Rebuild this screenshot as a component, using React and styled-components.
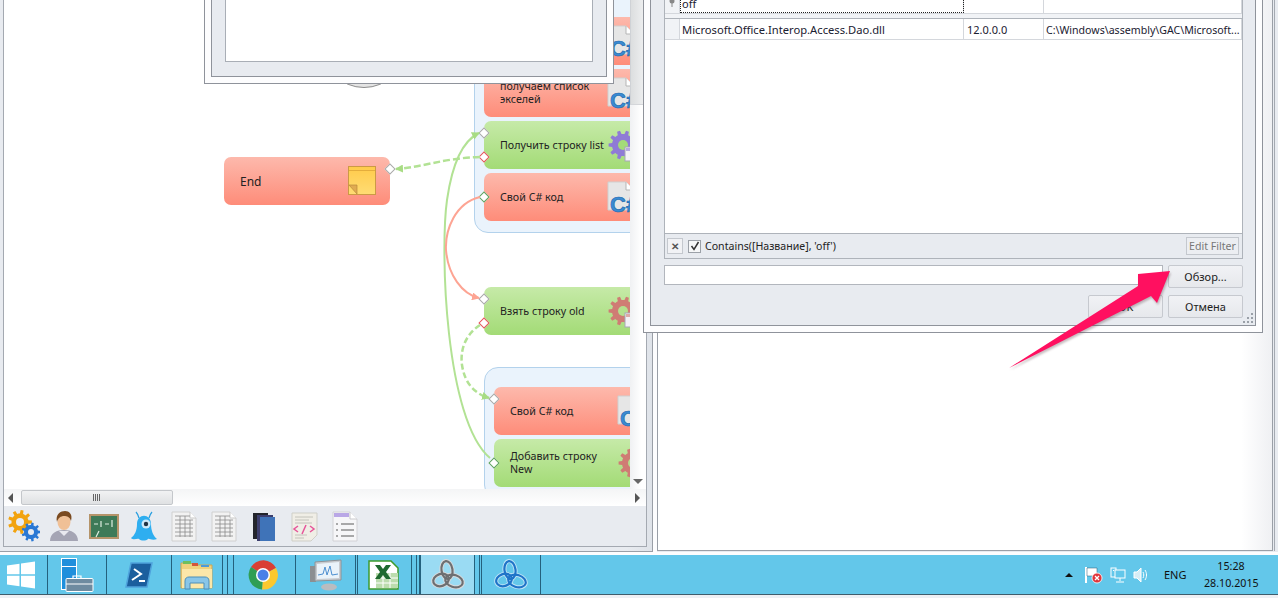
import React from 'react'
import styled, { createGlobalStyle } from 'styled-components'

const GlobalStyle = createGlobalStyle`
    html, body {
        margin: 0;
        padding: 0;
        background: #eef0f4;
    }
    * {
        box-sizing: border-box;
    }
`;

const UI_FONT = `"Noto Sans", "Liberation Sans", sans-serif`;

const Screen = styled.div`
    position: relative;
    width: 1278px;
    height: 598px;
    overflow: hidden;
    display: flex;
    flex-direction: column;
    font-family: ${UI_FONT};
    font-size: 11px;
    color: #222;
    background: #eef0f4;
`;

const Workspace = styled.div`
    display: flex;
    height: 555px;
    padding-bottom: 3px;
    background: #fdfdfe;
`;

const LeftWindow = styled.div`
    width: 653px;
    display: flex;
    padding: 0 5px 4px 3px;
    background: linear-gradient(90deg, #e8ebf0 96%, #dfe3e9);
    border-right: 1px solid #9a9fa7;
    border-bottom: 1px solid #9a9fa7;
`;

const Panel = styled.div`
    flex: 1;
    display: flex;
    flex-direction: column;
    background: #fff;
    border: 1px solid #a4a9b1;
    border-top: 0;
    min-width: 0;
`;

const CanvasRow = styled.div`
    flex: 1;
    display: flex;
    min-height: 0;
`;

const Canvas = styled.div`
    position: relative;
    width: 626px;
    overflow: hidden;
    background: #fff;
`;

const VScroll = styled.div`
    flex: 1;
    display: flex;
    flex-direction: column;
    align-items: center;
    justify-content: flex-end;
    padding-bottom: 5px;
    background: linear-gradient(90deg, #f0f1f3, #fff 70%);
`;

const ScrollThumb = styled.div`
    width: 100%;
    height: 105px;
    margin-bottom: auto;
    background: linear-gradient(90deg, #dcdedf, #f1f2f3);
    border-left: 1px solid #cfd2d6;
    border-bottom: 1px solid #d4d6da;
`;

const ArrowDown = styled.div`
    width: 0;
    height: 0;
    border-left: 5px solid transparent;
    border-right: 5px solid transparent;
    border-top: 5px solid #666;
`;

const HScroll = styled.div`
    height: 17px;
    display: flex;
    align-items: center;
    padding: 0 6px 0 4px;
    background: linear-gradient(180deg, #f4f5f6, #fff);
`;

const ArrowLeft = styled.div`
    width: 0;
    height: 0;
    margin-right: 8px;
    border-top: 5px solid transparent;
    border-bottom: 5px solid transparent;
    border-right: 5px solid #555;
`;

const ArrowRight = styled.div`
    width: 0;
    height: 0;
    margin-left: auto;
    border-top: 5px solid transparent;
    border-bottom: 5px solid transparent;
    border-left: 5px solid #555;
`;

const HThumb = styled.div`
    width: 152px;
    height: 15px;
    display: flex;
    align-items: center;
    justify-content: center;
    background: linear-gradient(180deg, #f1f2f3, #dfe1e3);
    border: 1px solid #c4c7cb;
    border-radius: 2px;
`;

const IconBar = styled.div`
    height: 40px;
    display: flex;
    align-items: center;
    gap: 8px;
    padding-left: 4px;
    background: #e8ebf0;
`;

const RightWindow = styled.div`
    flex: 1;
    margin-left: 4px;
    display: flex;
    background: #e8ebf0;
    border-bottom: 1px solid transparent;
`;

const RightBody = styled.div`
    width: 616px;
    background: linear-gradient(90deg, #fff 95%, #eff0f3);
    border-left: 1px solid #9a9fa7;
    border-right: 1px solid #9a9fa7;
    border-bottom: 1px solid #9a9fa7;
`;

const RightEdge = styled.div`
    flex: 1;
    margin-left: 1px;
    border-left: 1px solid #a4a9b1;
`;

/* diagram */

const Group = styled.div`
    position: absolute;
    left: ${p => p.$x}px;
    top: ${p => p.$y}px;
    width: 190px;
    display: flex;
    flex-direction: column;
    gap: 4px;
    padding: ${p => p.$pad}px 0 11px 9px;
    background: #eaf3fc;
    border: 1px solid #b3d2ec;
    border-radius: 14px;
`;

const Node = styled.div`
    position: ${p => (p.$x !== undefined ? 'absolute' : 'relative')};
    left: ${p => p.$x}px;
    top: ${p => p.$y}px;
    flex: none;
    width: 166px;
    height: 48px;
    display: flex;
    align-items: center;
    padding-left: 16px;
    border-radius: 7px;
    background: ${p => p.$green
        ? 'linear-gradient(180deg, #c6eaa8, #a3db76)'
        : 'linear-gradient(180deg, #fdb9ac, #fe8c79)'};
`;

const NodeLabel = styled.div`
    width: 108px;
    flex: none;
    font-size: ${p => p.$size || 10.7}px;
    line-height: 13px;
    color: #222;
    white-space: pre-line;
`;

const NodeGlyph = styled.div`
    width: 40px;
    height: 40px;
    flex: none;
    margin-top: 8px;
`;

const Port = styled.div`
    position: absolute;
    left: ${p => (p.$right ? 'auto' : '-4px')};
    right: ${p => (p.$right ? '-4px' : 'auto')};
    top: ${p => p.$top - 4}px;
    width: 8px;
    height: 8px;
    background: #fff;
    border: 1px solid ${p => p.$color};
    transform: rotate(45deg);
`;

const StartCircle = styled.div`
    position: absolute;
    left: 318px;
    top: 4px;
    width: 84px;
    height: 84px;
    border-radius: 50%;
    background: #e4e4e4;
    border: 1px solid #8c8c8c;
`;

const Wires = styled.svg`
    position: absolute;
    left: 0;
    top: 0;
    pointer-events: none;
`;

/* dialogs */

const SmallDialog = styled.div`
    position: absolute;
    left: 204px;
    top: 0;
    width: 410px;
    height: 84px;
    padding: 0 6px 6px;
    background: #fdfdfe;
    border: 1px solid #8f939b;
    border-top: 0;
`;

const SmallFrame = styled.div`
    height: 100%;
    padding: 0 13px 14px;
    background: #e8ebf0;
    border: 1px solid #8f939b;
    border-top: 0;
`;

const SmallContent = styled.div`
    height: 100%;
    background: #fff;
    border: 1px solid #a9aeb6;
    border-top: 0;
`;

const FilterDialog = styled.div`
    position: absolute;
    left: 643px;
    top: 0;
    width: 620px;
    height: 333px;
    padding: 0 6px 6px;
    background: #fdfdfe;
    border: 1px solid #8f939b;
    border-top: 0;
`;

const DialogFrame = styled.div`
    position: relative;
    height: 100%;
    display: flex;
    flex-direction: column;
    padding: 0 12px 7px 13px;
    background: #e8ebf0;
    border: 1px solid #8f939b;
    border-top: 0;
`;

const TableBox = styled.div`
    height: 259px;
    display: flex;
    flex-direction: column;
    overflow: hidden;
    background: #fff;
    border: 1px solid #aeb3ba;
    border-top: 0;
`;

const Rows = styled.div`
    flex: 1;
    overflow: hidden;
`;

const GridRow = styled.div`
    display: grid;
    grid-template-columns: 15px 284px 80px 1fr;
    height: ${p => p.$h}px;
    margin-top: ${p => p.$offset || 0}px;
    border-bottom: 1px solid #d4d7dc;
    color: #1a2030;
    line-height: ${p => p.$line}px;
`;

const Cell = styled.div`
    padding-left: ${p => p.$pad || 2}px;
    border-right: 1px solid #d4d7dc;
    font-size: ${p => p.$size || 11}px;
    white-space: nowrap;
    overflow: hidden;
    background: ${p => (p.$head ? '#f1f3f6' : 'transparent')};
    outline: ${p => (p.$focus ? '1px dotted #222' : 'none')};
    outline-offset: -1px;
`;

const RowGap = styled.div`
    height: 5px;
    background: #f1f3f6;
    border-bottom: 1px solid #aeb3ba;
`;

const FilterBar = styled.div`
    height: 25px;
    flex: none;
    display: flex;
    align-items: center;
    padding: 0 3px 0 2px;
    background: #e8ebf0;
    border-top: 1px solid #aeb3ba;
`;

const FilterClose = styled.div`
    width: 16px;
    height: 16px;
    display: flex;
    align-items: center;
    justify-content: center;
    background: #f1f2f5;
    border: 1px solid #c4c8ce;
    color: #555;
    font-size: 10px;
    font-weight: 700;
    line-height: 1;
`;

const FilterCheck = styled.div`
    width: 13px;
    height: 13px;
    margin: 0 4px 0 5px;
    display: flex;
    align-items: center;
    justify-content: center;
    background: #f6f7f8;
    border: 1px solid #9ca1a8;
`;

const FilterText = styled.div`
    flex: 1;
    font-size: 10.6px;
    color: #222;
`;

const EditFilter = styled.div`
    width: 53px;
    height: 18px;
    text-align: center;
    font-size: 10.6px;
    line-height: 16px;
    color: #777;
    background: #eceef2;
    border: 1px solid #c4c8ce;
`;

const PathRow = styled.div`
    display: flex;
    justify-content: space-between;
    margin-top: 6px;
`;

const ButtonRow = styled.div`
    display: flex;
    justify-content: flex-end;
    gap: 5px;
    margin-top: 7px;
`;

const PathInput = styled.div`
    width: 499px;
    height: 20px;
    background: #fff;
    border: 1px solid #b2b6bd;
`;

const DialogButton = styled.div`
    width: 75px;
    height: 23px;
    text-align: center;
    line-height: 21px;
    color: #222;
    background: linear-gradient(180deg, #f1f2f5, #e6e8ec);
    border: 1px solid #c6c9cf;
    border-radius: 2px;
`;

const Grip = styled.svg`
    position: absolute;
    right: 1px;
    bottom: 1px;
`;

const Pointer = styled.svg`
    position: absolute;
    left: 1000px;
    top: 260px;
    pointer-events: none;
    filter: drop-shadow(1px 2px 1px rgba(90, 60, 70, 0.35));
`;

/* taskbar */

const Taskbar = styled.div`
    height: 40px;
    display: flex;
    align-items: stretch;
    background: #63c7ea;
    border-bottom: 1px solid #3f5d6c;
`;

const TaskButton = styled.div`
    width: ${p => p.$w}px;
    flex: none;
    display: flex;
    align-items: center;
    justify-content: center;
    padding-right: ${p => p.$nudge || 0}px;
    border-right: 1px solid #24617d;
    border-left: ${p => (p.$active ? '1px solid #24617d' : '0')};
    background: ${p => (p.$active ? '#9adbf3' : 'transparent')};
`;

const Tray = styled.div`
    margin-left: auto;
    display: flex;
    align-items: center;
    padding-right: 20px;
    color: #111;
    font-size: 11px;
`;

const TrayCaret = styled.div`
    width: 0;
    height: 0;
    margin-right: 11px;
    border-left: 4px solid transparent;
    border-right: 4px solid transparent;
    border-bottom: 4px solid #111;
`;

const TrayLang = styled.div`
    width: 23px;
    margin: 0 17px 0 15px;
    white-space: nowrap;
`;

const Clock = styled.div`
    width: 54px;
    text-align: center;
    font-size: 10.7px;
    line-height: 17px;
    white-space: nowrap;
`;

/* drawings */

const gearPath = (cx, cy, outer, inner, teeth) => {
    const step = (Math.PI * 2) / teeth
    let d = ''
    for (let i = 0; i < teeth; i++) {
        const a = i * step
        const pts = [
            [inner, a - step * 0.5],
            [inner, a - step * 0.28],
            [outer, a - step * 0.17],
            [outer, a + step * 0.17],
            [inner, a + step * 0.28],
        ]
        pts.forEach(([r, t], j) => {
            const x = (cx + r * Math.cos(t)).toFixed(1)
            const y = (cy + r * Math.sin(t)).toFixed(1)
            d += `${i === 0 && j === 0 ? 'M' : 'L'}${x} ${y} `
        })
    }
    return d + 'Z'
}

const SharpIcon = () => (
    <svg width="40" height="40" viewBox="0 0 40 40" overflow="visible">
        <path d="M0 1h18l8 8v20H0z" fill="#e6e6e6" stroke="#cfcfcf" />
        <path d="M18 1v8h8" fill="#fff" stroke="#b5b5b5" />
        <text x="2" y="31" fontFamily="Liberation Sans" fontWeight="700" fontSize="22" fill="#3a8bd2" stroke="#1d68ad" strokeWidth="0.6">C#</text>
    </svg>
)

const GearIcon = ({ color, sheet }) => (
    <svg width="40" height="40" viewBox="0 0 40 40">
        <path d={gearPath(15, 16, 14.5, 11, 10)} fill={color} />
        <circle cx="15" cy="16" r="5" fill={sheet} />
        <rect x="17" y="18" width="15" height="14" fill="#f3f1f6" stroke="#a7a7b5" />
        <rect x="18" y="19" width="13" height="3" fill={color} opacity="0.6" />
    </svg>
)

const StickyIcon = () => (
    <svg width="40" height="40" viewBox="0 0 40 40">
        <defs>
            <linearGradient id="stickyFill" x1="0" y1="0" x2="0" y2="1">
                <stop offset="0" stopColor="#ffcb4a" />
                <stop offset="1" stopColor="#ffdc74" />
            </linearGradient>
        </defs>
        <rect x="0.5" y="1.5" width="27" height="28" fill="url(#stickyFill)" stroke="#cc9a45" />
        <path d="M1 5.500h26" stroke="#e4ad3c" />
        <path d="M1 20h8v9z" fill="#e0ab52" stroke="#b98a3a" strokeWidth="0.7" />
    </svg>
)

const GearsTool = () => (
    <svg width="32" height="32" viewBox="0 0 32 32">
        <path d={gearPath(12, 12, 12, 8.5, 9)} fill="#f2a30f" />
        <circle cx="12" cy="12" r="4" fill="#e8ebf0" />
        <path d={gearPath(23, 22, 9.5, 7, 9)} fill="#2a78d4" />
        <circle cx="23" cy="22" r="3" fill="#e8ebf0" />
    </svg>
)

const PersonTool = () => (
    <svg width="32" height="32" viewBox="0 0 32 32">
        <path d="M2 31c0-8 7-11 14-11s14 3 14 11z" fill="#a5a5b4" />
        <path d="M11 21l5 5 5-5z" fill="#e9e9ef" />
        <ellipse cx="16" cy="12" rx="6.500" ry="8" fill="#f0c096" />
        <path d="M9 12c-2-8 4-11 8-11s8 3 6 10c-1-4-4-5-7-5s-6 2-7 6z" fill="#7a4a20" />
    </svg>
)

const BoardTool = () => (
    <svg width="32" height="32" viewBox="0 0 32 32">
        <rect x="1" y="4" width="30" height="25" fill="#b5946a" />
        <rect x="3" y="6" width="26" height="21" fill="#3e7a58" />
        <path d="M6 14h4M13 11v6M17 14h4M24 10v7M8 27l3-6" stroke="#dfeee2" strokeWidth="1.200" />
    </svg>
)

const MonsterTool = () => (
    <svg width="32" height="32" viewBox="0 0 32 32">
        <path d="M11 8c-1-3-2-5-3-6M21 8c1-3 2-5 3-6" stroke="#2a9fe0" strokeWidth="1.300" fill="none" />
        <path d="M9 14c0-11 14-11 14 0 0 6 2 12 6 15-5 2-8-1-9 0-2 2-7 2-9 0-2-1-5 2-8-1 4-3 6-8 6-14z" fill="#2eaef0" />
        <circle cx="18" cy="14" r="4.500" fill="#cfeafa" />
        <circle cx="18" cy="14" r="2.200" fill="#234" />
    </svg>
)

const SheetTool = () => (
    <svg width="32" height="32" viewBox="0 0 32 32">
        <path d="M4 2h18l6 6v23H4z" fill="#f2f2f2" stroke="#d0d0d0" />
        <path d="M22 2v6h6" fill="#fff" stroke="#c9c9c9" />
        <path d="M7 6h15M7 10h18M7 14h18M7 18h18M7 22h18M7 26h18M12 6v21M17 6v21M22 10v17" stroke="#8b8b8b" strokeWidth="0.800" />
    </svg>
)

const BooksTool = () => (
    <svg width="32" height="32" viewBox="0 0 32 32">
        <rect x="5" y="3" width="15" height="26" fill="#23252c" />
        <rect x="9" y="5" width="16" height="26" fill="#3c3f6e" />
        <rect x="12" y="7" width="15" height="24" fill="#3f73b8" />
    </svg>
)

const XmlTool = () => (
    <svg width="32" height="32" viewBox="0 0 32 32">
        <path d="M4 3h25v22l-6 6H4z" fill="#f0eee6" stroke="#cfcfc8" />
        <path d="M7 7h18M7 10h14M7 13h17M7 25h12M7 28h9" stroke="#b8b8b0" strokeWidth="0.800" />
        <path d="M10 16l-4 3 4 3M22 16l4 3-4 3M18 15l-4 9" stroke="#e6559a" strokeWidth="1.500" fill="none" />
    </svg>
)

const ListTool = () => (
    <svg width="32" height="32" viewBox="0 0 32 32">
        <path d="M5 2h17l7 7v22H5z" fill="#f6f6f8" stroke="#d2d2d6" />
        <path d="M6 3h15v4H6z" fill="#b9a7e6" />
        <path d="M22 2v7h7" fill="#fff" stroke="#c9c9cc" />
        <path d="M8 14h2M13 14h13M8 20h2M13 20h13M8 26h2M13 26h13" stroke="#8f8f8f" strokeWidth="1.500" />
    </svg>
)

const WindowsLogo = () => (
    <svg width="28" height="28" viewBox="0 0 28 28">
        <path d="M0 4.500l12.500-1.800v10.600H0zM14 2.500L28 .5v12.800H14zM0 14.800h12.500v10.500L0 23.500zM14 14.800h14v12.700l-14-2z" fill="#fff" />
    </svg>
)

const ServerIcon = () => (
    <svg width="34" height="34" viewBox="0 0 34 34">
        <rect x="1.500" y=".5" width="15" height="8" fill="#1f8fdc" stroke="#fff" />
        <rect x="1.500" y="8.500" width="15" height="23" fill="#1f8fdc" stroke="#fff" />
        <path d="M13 21v-3h8v3" fill="none" stroke="#fff" strokeWidth="1.200" />
        <rect x="6" y="20.500" width="27" height="13" rx="1" fill="#6e8ba0" stroke="#fff" />
        <path d="M6 26h27" stroke="#fff" />
    </svg>
)

const ShellIcon = () => (
    <svg width="30" height="30" viewBox="0 0 30 30">
        <path d="M7 3h21l-5 24H2z" fill="#1b5f9e" stroke="#4fa3dc" strokeWidth="1.500" />
        <path d="M10 9l7 5-9 6M15 21h6" stroke="#fff" strokeWidth="2" fill="none" />
    </svg>
)

const FolderIcon = () => (
    <svg width="34" height="34" viewBox="0 0 34 34">
        <path d="M1 5h10l2 2h19v23H1z" fill="#f0d27e" stroke="#c9a656" />
        <rect x="3" y="3" width="8" height="3" fill="#6fbf5e" />
        <rect x="12" y="5" width="6" height="3" fill="#d4553a" />
        <rect x="21" y="7" width="8" height="2" fill="#4e9ad8" />
        <path d="M2 11h30v19H2z" fill="#fbe7a9" />
        <path d="M5 31v-8c0-3 2-4 4-4h16c2 0 4 1 4 4v8h-5v-6H10v6z" fill="#89c6e8" stroke="#4d8fb8" />
    </svg>
)

const ChromeIcon = () => (
    <svg width="30" height="30" viewBox="0 0 30 30">
        <path d="M15 15L3 7a14.500 14.500 0 0 1 25 1z" fill="#d93f34" />
        <path d="M15 15l13-7a14.500 14.500 0 0 1-14 21.500z" fill="#fbc82f" />
        <path d="M15 15l-1 14.500A14.500 14.500 0 0 1 3 7z" fill="#2f9e54" />
        <circle cx="15" cy="15" r="7" fill="#fff" />
        <circle cx="15" cy="15" r="5.500" fill="#4a80e8" />
    </svg>
)

const MonitorIcon = () => (
    <svg width="34" height="34" viewBox="0 0 34 34">
        <rect x="1" y="8" width="6" height="16" fill="#8c8f92" />
        <path d="M6 4l26-2v20L6 23z" fill="#c9ccd0" stroke="#8e9296" />
        <path d="M8 6l22-2v16L8 21z" fill="#eaf3fa" />
        <path d="M9 17l5-1 2-7 2 8 3-9 2 9 6-1" fill="none" stroke="#4d8fd0" />
        <ellipse cx="20" cy="29" rx="8" ry="3.500" fill="#b9bcc0" />
    </svg>
)

const ExcelIcon = () => (
    <svg width="34" height="34" viewBox="0 0 34 34">
        <path d="M3 3h22l7 7v21H3z" fill="#fff" stroke="#3f9a2c" strokeWidth="1.500" />
        <path d="M10 15h22v15H10z" fill="#bcdcae" />
        <path d="M10 20h22M10 25h22M17 15v15M24 15v15" stroke="#fff" />
        <path d="M9 7h5l3 4 3-4h5l-5 7 5 7h-5l-3-4-3 4H9l5-7z" fill="#1f6a2f" />
    </svg>
)

const KnotIcon = ({ color, edge }) => (
    <svg width="34" height="32" viewBox="0 0 34 32" fill="none">
        <g stroke={edge} strokeWidth="4">
            <ellipse cx="16" cy="11" rx="5.500" ry="9" transform="rotate(-8 16 11)" />
            <ellipse cx="10" cy="21" rx="8" ry="6" transform="rotate(-20 10 21)" />
            <ellipse cx="23" cy="22" rx="9" ry="6" transform="rotate(18 23 22)" />
        </g>
        <g stroke={color} strokeWidth="2.200">
            <ellipse cx="16" cy="11" rx="5.500" ry="9" transform="rotate(-8 16 11)" />
            <ellipse cx="10" cy="21" rx="8" ry="6" transform="rotate(-20 10 21)" />
            <ellipse cx="23" cy="22" rx="9" ry="6" transform="rotate(18 23 22)" />
        </g>
    </svg>
)

const FlagIcon = () => (
    <svg width="19" height="18" viewBox="0 0 19 18" style={{ marginRight: 7 }}>
        <path d="M2 1v16" stroke="#fff" strokeWidth="2" />
        <path d="M3 2h10v8H3z" fill="#fff" stroke="#2a5570" strokeWidth="0.500" />
        <circle cx="13" cy="12" r="5" fill="#e0353b" stroke="#fff" strokeWidth="0.800" />
        <path d="M11 10l4 4M15 10l-4 4" stroke="#fff" strokeWidth="1.300" />
    </svg>
)

const NetworkIcon = () => (
    <svg width="16" height="18" viewBox="0 0 16 18" fill="none" style={{ marginRight: 7 }}>
        <rect x="1" y="2" width="5" height="9" stroke="#fff" />
        <rect x="5" y="4" width="10" height="8" fill="#63c7ea" stroke="#fff" />
        <path d="M10 12v3M6 16h8M3 4.500h1" stroke="#fff" />
    </svg>
)

const SpeakerIcon = () => (
    <svg width="16" height="18" viewBox="0 0 16 18" fill="none">
        <path d="M1 6h3l4-4v14l-4-4H1z" fill="#d7edf5" stroke="#fff" />
        <path d="M10 6c1 2 1 4 0 6M12 4c2 3 2 7 0 10" stroke="#fff" />
    </svg>
)

const GripLines = () => (
    <svg width="8" height="7" viewBox="0 0 8 7">
        <path d="M.5 0v7M2.500 0v7M4.500 0v7M6.500 0v7" stroke="#666" />
    </svg>
)

const Wiring = () => (
    <Wires width="626" height="489" viewBox="0 0 626 489" fill="none">
        <defs>
            <marker id="greenHead" markerWidth="9" markerHeight="8" refX="7" refY="4" orient="auto" markerUnits="userSpaceOnUse">
                <path d="M0 0l8 4-8 4z" fill="#a8dc84" />
            </marker>
            <marker id="salmonHead" markerWidth="9" markerHeight="8" refX="7" refY="4" orient="auto" markerUnits="userSpaceOnUse">
                <path d="M0 0l8 4-8 4z" fill="#fda493" />
            </marker>
        </defs>
        <path d="M486 458C441 420 436 250 443 200C448 165 458 141 475 133" stroke="#b2e294" strokeWidth="2" markerEnd="url(#greenHead)" />
        <path d="M476 157C440 158 420 167 392 169" stroke="#b2e294" strokeWidth="2.500" strokeDasharray="7 3" markerEnd="url(#greenHead)" />
        <path d="M476 197C451 203 441 230 442 250C444 275 458 294 475 298" stroke="#fda493" strokeWidth="2" markerEnd="url(#salmonHead)" />
        <path d="M476 325C461 335 456 350 458 365C461 385 472 394 485 398" stroke="#b2e294" strokeWidth="2.500" strokeDasharray="6 3" markerEnd="url(#greenHead)" />
    </Wires>
)

const PORT_GREY = '#a9a9a9'
const PORT_RED = '#e5565a'
const PORT_GREEN = '#5ea35e'

const toolIcons = [GearsTool, PersonTool, BoardTool, MonsterTool, SheetTool, SheetTool, BooksTool, XmlTool, ListTool]

const App = () => {
    return (
        <Screen>
            <GlobalStyle />
            <Workspace>
                <LeftWindow>
                    <Panel>
                        <CanvasRow>
                            <Canvas>
                                <StartCircle />
                                <Group $x={470} $y={-20} $pad={36}>
                                    <Node><NodeLabel /><NodeGlyph><SharpIcon /></NodeGlyph></Node>
                                    <Node>
                                        <NodeLabel>{'получаем список\nэкселей'}</NodeLabel>
                                        <NodeGlyph><SharpIcon /></NodeGlyph>
                                    </Node>
                                    <Node $green>
                                        <NodeLabel>Получить строку list</NodeLabel>
                                        <NodeGlyph><GearIcon color="#8f7bd6" sheet="#a4dc78" /></NodeGlyph>
                                        <Port $top={12} $color={PORT_GREY} />
                                        <Port $top={36} $color={PORT_RED} />
                                    </Node>
                                    <Node>
                                        <NodeLabel>Свой C# код</NodeLabel>
                                        <NodeGlyph><SharpIcon /></NodeGlyph>
                                        <Port $top={24} $color={PORT_GREEN} />
                                    </Node>
                                </Group>
                                <Node $x={220} $y={157}>
                                    <NodeLabel $size={12}>End</NodeLabel>
                                    <NodeGlyph><StickyIcon /></NodeGlyph>
                                    <Port $right $top={12} $color={PORT_GREY} />
                                </Node>
                                <Node $x={480} $y={287} $green>
                                    <NodeLabel>Взять строку old</NodeLabel>
                                    <NodeGlyph><GearIcon color="#cf7c74" sheet="#b4e08e" /></NodeGlyph>
                                    <Port $top={12} $color={PORT_GREY} />
                                    <Port $top={36} $color={PORT_RED} />
                                </Node>
                                <Group $x={480} $y={367} $pad={19}>
                                    <Node>
                                        <NodeLabel>Свой C# код</NodeLabel>
                                        <NodeGlyph><SharpIcon /></NodeGlyph>
                                        <Port $top={12} $color={PORT_GREY} />
                                    </Node>
                                    <Node $green>
                                        <NodeLabel>{'Добавить строку\nNew'}</NodeLabel>
                                        <NodeGlyph><GearIcon color="#cf7c74" sheet="#b4e08e" /></NodeGlyph>
                                        <Port $top={24} $color={PORT_GREEN} />
                                    </Node>
                                </Group>
                                <Wiring />
                            </Canvas>
                            <VScroll>
                                <ScrollThumb />
                                <ArrowDown />
                            </VScroll>
                        </CanvasRow>
                        <HScroll>
                            <ArrowLeft />
                            <HThumb><GripLines /></HThumb>
                            <ArrowRight />
                        </HScroll>
                        <IconBar>
                            {toolIcons.map((Tool, i) => <Tool key={i} />)}
                        </IconBar>
                    </Panel>
                </LeftWindow>
                <RightWindow>
                    <RightBody />
                    <RightEdge />
                </RightWindow>
            </Workspace>

            <SmallDialog>
                <SmallFrame>
                    <SmallContent />
                </SmallFrame>
            </SmallDialog>

            <FilterDialog>
                <DialogFrame>
                    <TableBox>
                        <Rows>
                            <GridRow $h={20} $line={19} $offset={-6}>
                                <Cell $head>
                                    <svg width="10" height="14" viewBox="0 0 10 14">
                                        <circle cx="5" cy="7" r="2.500" fill="#888" />
                                        <path d="M5 9v4" stroke="#888" />
                                    </svg>
                                </Cell>
                                <Cell $focus>off</Cell>
                                <Cell />
                                <Cell />
                            </GridRow>
                            <RowGap />
                            <GridRow $h={21} $line={22}>
                                <Cell $head />
                                <Cell $size={11.2}>Microsoft.Office.Interop.Access.Dao.dll</Cell>
                                <Cell $pad={3}>12.0.0.0</Cell>
                                <Cell $pad={2} $size={10.6}>C:\Windows\assembly\GAC\Microsoft...</Cell>
                            </GridRow>
                        </Rows>
                        <FilterBar>
                            <FilterClose>✕</FilterClose>
                            <FilterCheck>
                                <svg width="10" height="10" viewBox="0 0 10 10">
                                    <path d="M1.500 5l2.500 3.500L8.500 1" fill="none" stroke="#333" strokeWidth="1.500" />
                                </svg>
                            </FilterCheck>
                            <FilterText>Contains([Название], 'off')</FilterText>
                            <EditFilter>Edit Filter</EditFilter>
                        </FilterBar>
                    </TableBox>
                    <PathRow>
                        <PathInput />
                        <DialogButton>Обзор...</DialogButton>
                    </PathRow>
                    <ButtonRow>
                        <DialogButton>OK</DialogButton>
                        <DialogButton>Отмена</DialogButton>
                    </ButtonRow>
                    <Grip width="11" height="11" viewBox="0 0 11 11" fill="#9aa0a8">
                        <rect x="8" y="0" width="2" height="2" />
                        <rect x="4" y="4" width="2" height="2" />
                        <rect x="8" y="4" width="2" height="2" />
                        <rect x="0" y="8" width="2" height="2" />
                        <rect x="4" y="8" width="2" height="2" />
                        <rect x="8" y="8" width="2" height="2" />
                    </Grip>
                </DialogFrame>
            </FilterDialog>

            <Pointer width="180" height="115" viewBox="0 0 180 115">
                <path d="M9 108L138 26L138 14L170 11L157 43L151 36Z" fill="#ff1060" />
            </Pointer>

            <Taskbar>
                <TaskButton $w={48} $nudge={5}><WindowsLogo /></TaskButton>
                <TaskButton $w={59}><ServerIcon /></TaskButton>
                <TaskButton $w={65}><ShellIcon /></TaskButton>
                <TaskButton $w={51}><FolderIcon /></TaskButton>
                <TaskButton $w={5} />
                <TaskButton $w={6} />
                <TaskButton $w={62} $nudge={3}><ChromeIcon /></TaskButton>
                <TaskButton $w={60}><MonitorIcon /></TaskButton>
                <TaskButton $w={2} />
                <TaskButton $w={54} $nudge={4}><ExcelIcon /></TaskButton>
                <TaskButton $w={5} />
                <TaskButton $w={3} />
                <TaskButton $w={55} $active><KnotIcon color="#6d6f72" edge="#d8dadc" /></TaskButton>
                <TaskButton $w={5} />
                <TaskButton $w={2} />
                <TaskButton $w={59}><KnotIcon color="#1f74c8" edge="#bfe4f6" /></TaskButton>
                <Tray>
                    <TrayCaret />
                    <FlagIcon />
                    <NetworkIcon />
                    <SpeakerIcon />
                    <TrayLang>ENG</TrayLang>
                    <Clock>15:28<br />28.10.2015</Clock>
                </Tray>
            </Taskbar>
        </Screen>
    )
}

export default App
